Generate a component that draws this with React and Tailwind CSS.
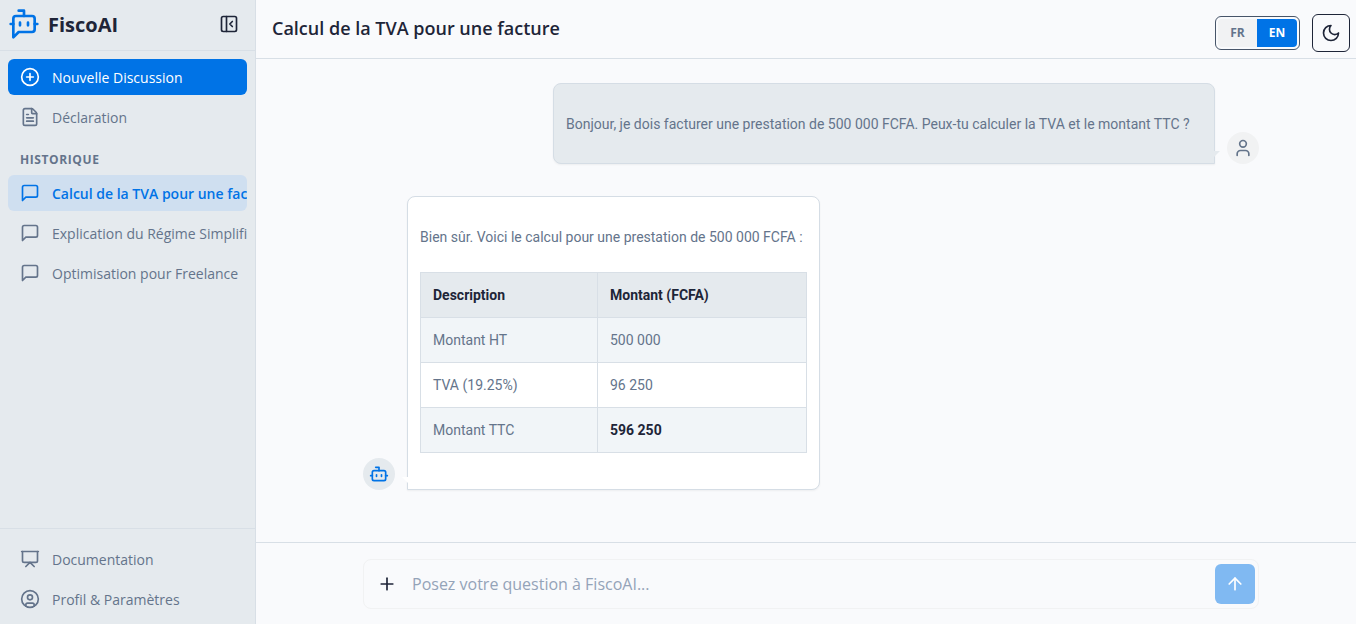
import { ArrowUp, Bot, CirclePlus, CircleUser, FileText, PanelLeftClose, Plus, Presentation, User } from 'lucide-react'

const history = [
  { id: 1, title: 'Calcul de la TVA pour une facture', active: true },
  { id: 2, title: 'Explication du Régime Simplifié' },
  { id: 3, title: 'Optimisation pour Freelance' },
]

const rows = [
  { label: 'Montant HT', amount: '500 000' },
  { label: 'TVA (19.25%)', amount: '96 250' },
  { label: 'Montant TTC', amount: '596 250', total: true },
]

function Outline({ size = 20, className = '', children }) {
  return (
    <svg
      width={size}
      height={size}
      viewBox="0 0 24 24"
      fill="none"
      stroke="currentColor"
      strokeWidth="2"
      strokeLinecap="round"
      strokeLinejoin="round"
      className={className}
      aria-hidden="true"
    >
      {children}
    </svg>
  )
}

function Logo() {
  return (
    <Outline size={32} className="text-[#0073e6]">
      <path d="M12 6V2H8" />
      <path d="m8 18-4 4V8a2 2 0 0 1 2-2h12a2 2 0 0 1 2 2v8a2 2 0 0 1-2 2Z" />
      <path d="M2 12h2M9 11v2M15 11v2M20 12h2" />
    </Outline>
  )
}

function ChatIcon({ className }) {
  return (
    <Outline className={className}>
      <path d="M21 15a2 2 0 0 1-2 2H7l-4 4V5a2 2 0 0 1 2-2h14a2 2 0 0 1 2 2z" />
    </Outline>
  )
}

function MoonIcon() {
  return (
    <Outline>
      <path d="M12 3a6 6 0 0 0 9 9 9 9 0 1 1-9-9Z" />
    </Outline>
  )
}

function NavItem({ icon: Icon, children, className = 'font-medium text-[#64748b]' }) {
  return (
    <button
      type="button"
      className={`flex h-9 w-full items-center gap-3 overflow-hidden rounded-md px-3 text-left text-sm whitespace-nowrap ${className}`}
    >
      <Icon size={20} className="shrink-0" />
      <span className="pt-0.5">{children}</span>
    </button>
  )
}

function Sidebar() {
  return (
    <aside className="flex w-64 shrink-0 flex-col border-r border-[#d8dfe6] bg-[#e5eaee]">
      <div className="flex items-center justify-between border-b border-[#d8dfe6] pt-2 pr-4 pb-2.5 pl-2">
        <a href="#" className="flex items-center gap-2 text-[#1e2538]">
          <Logo />
          <span className="pt-0.5 text-xl font-bold">FiscoAI</span>
        </a>
        <button type="button" aria-label="Réduire le menu" className="text-[#1e2538]">
          <PanelLeftClose size={20} />
        </button>
      </div>

      <nav className="flex flex-1 flex-col gap-1 p-2">
        <NavItem icon={CirclePlus} className="bg-[#0073e6] font-medium text-white">Nouvelle Discussion</NavItem>
        <NavItem icon={FileText}>Déclaration</NavItem>
        <h2 className="mt-2 px-3 pt-0.5 text-xs leading-[22px] font-bold tracking-wider text-[#64748b] uppercase">Historique</h2>
        {history.map((item) => (
          <NavItem
            key={item.id}
            icon={ChatIcon}
            className={item.active ? 'bg-[#cfdff0] font-semibold text-[#0073e6]' : 'text-[#64748b]'}
          >
            {item.title}
          </NavItem>
        ))}
      </nav>

      <div className="flex flex-col gap-1 border-t border-[#d8dfe6] px-2 pt-3 pb-[7px]">
        <NavItem icon={Presentation}>Documentation</NavItem>
        <NavItem icon={CircleUser}>Profil &amp; Paramètres</NavItem>
      </div>
    </aside>
  )
}

function Header() {
  return (
    <header className="flex items-start justify-between border-b border-[#d8dfe6] pt-3.5 pr-1.5 pb-1.5 pl-4">
      <h1 className="text-lg leading-7 font-semibold text-[#1e2538]">Calcul de la TVA pour une facture</h1>
      <div className="flex items-center gap-3">
        <div className="flex rounded-md border border-[#475569] p-0.5 text-xs font-bold">
          <button type="button" className="h-7 w-[39px] rounded-l bg-[#f1f2f3] text-[#64748b]">FR</button>
          <button type="button" className="h-7 w-10 rounded-r bg-[#0073e6] text-white">EN</button>
        </div>
        <button
          type="button"
          aria-label="Mode sombre"
          className="flex size-[38px] items-center justify-center rounded-md border border-[#1e2538] text-[#1e2538]"
        >
          <MoonIcon />
        </button>
      </div>
    </header>
  )
}

function AmountTable() {
  return (
    <table className="w-full border-collapse text-left">
      <thead>
        <tr className="bg-[#e5eaee] text-[#1e2538]">
          <th className="w-[177px] border border-[#d8dfe6] px-3 py-3 leading-5 font-bold">Description</th>
          <th className="border border-[#d8dfe6] px-3 py-3 leading-5 font-bold">Montant (FCFA)</th>
        </tr>
      </thead>
      <tbody>
        {rows.map((row) => (
          <tr key={row.label} className="odd:bg-[#f1f5f8]">
            <td className="border border-[#d8dfe6] px-3 py-3 leading-5">{row.label}</td>
            <td className={`border border-[#d8dfe6] px-3 py-3 leading-5 ${row.total ? 'font-bold text-[#1e2538]' : ''}`}>
              {row.amount}
            </td>
          </tr>
        ))}
      </tbody>
    </table>
  )
}

function Conversation() {
  return (
    <section className="flex-1 pt-6 pl-2.5 font-['Roboto',sans-serif] text-sm text-[#64748b]">
      <div className="mx-auto flex max-w-4xl flex-col gap-8">
        <div className="flex items-end justify-end gap-3">
          <div className="relative w-[662px] rounded-lg rounded-br-none border border-[#d5dde5] bg-[#e5eaee] px-3 pt-[29px] pb-[27px] shadow-xs">
            <p className="leading-[23px]">
              Bonjour, je dois facturer une prestation de 500 000 FCFA. Peux-tu calculer la TVA et le montant TTC ?
            </p>
            <span className="absolute -right-1.5 bottom-1.5 border-t-6 border-r-6 border-t-[#e5eaee] border-r-transparent" />
          </div>
          <div className="flex size-8 shrink-0 items-center justify-center rounded-full bg-[#f1f2f3]">
            <User size={20} />
          </div>
        </div>

        <div className="flex items-end gap-3">
          <div className="flex size-8 shrink-0 items-center justify-center rounded-full bg-[#e5eaee] text-[#0073e6]">
            <Bot size={20} />
          </div>
          <div className="relative w-[413px] rounded-lg rounded-bl-none border border-[#d5dde5] bg-white px-3 pt-[29px] pb-9 shadow-xs">
            <p className="mb-[23px] leading-[23px]">Bien sûr. Voici le calcul pour une prestation de 500 000 FCFA :</p>
            <AmountTable />
            <span className="absolute bottom-1.5 -left-1.5 border-t-6 border-l-6 border-t-white border-l-transparent" />
          </div>
        </div>
      </div>
    </section>
  )
}

function Composer() {
  return (
    <footer className="border-t border-[#d8dfe6] pt-4 pb-[15px] pl-2.5">
      <form className="mx-auto flex max-w-4xl items-center rounded-lg border border-[#f1f2f3] px-[3px] py-1">
        <button type="button" aria-label="Joindre un fichier" className="flex size-10 items-center justify-center text-[#1e2538]">
          <Plus size={20} />
        </button>
        <input
          type="text"
          aria-label="Votre question"
          placeholder="Posez votre question à FiscoAI..."
          className="h-10 min-w-0 flex-1 px-[5px] text-base outline-none placeholder:text-[#94a3b8]"
        />
        <button
          type="submit"
          aria-label="Envoyer"
          className="flex size-10 items-center justify-center rounded-md bg-[#80b9f2] text-white"
        >
          <ArrowUp size={20} />
        </button>
      </form>
    </footer>
  )
}

export default function App() {
  return (
    <div className="flex min-h-screen bg-[#f9fafc] font-['Open_Sans',sans-serif]">
      <Sidebar />
      <main className="flex min-w-0 flex-1 flex-col">
        <Header />
        <Conversation />
        <Composer />
      </main>
    </div>
  )
}
